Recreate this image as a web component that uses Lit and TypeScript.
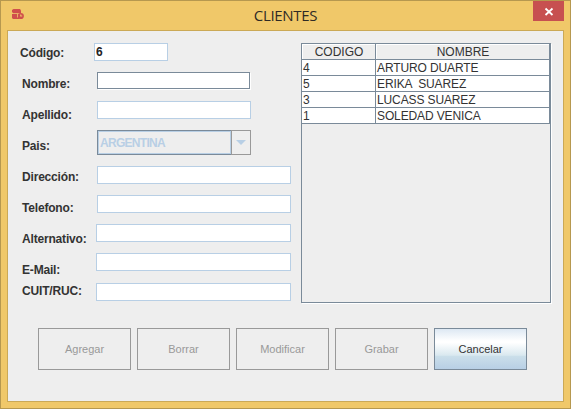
import { LitElement, html, css } from "lit";
import { customElement } from "lit/decorators.js";
import { classMap } from "lit/directives/class-map.js";

interface Field {
  label: string;
  kind: "code" | "focus" | "short" | "combo" | "long" | "wide";
  value?: string;
}

const FIELDS: Field[] = [
  { label: "Código:", kind: "code", value: "6" },
  { label: "Nombre:", kind: "focus" },
  { label: "Apellido:", kind: "short" },
  { label: "Pais:", kind: "combo", value: "ARGENTINA" },
  { label: "Dirección:", kind: "long" },
  { label: "Telefono:", kind: "long" },
  { label: "Alternativo:", kind: "wide" },
  { label: "E-Mail:", kind: "wide" },
  { label: "CUIT/RUC:", kind: "wide" },
];

const ROWS = [
  ["4", "ARTURO DUARTE"],
  ["5", "ERIKA  SUAREZ"],
  ["3", "LUCASS SUAREZ"],
  ["1", "SOLEDAD VENICA"],
];

const ACTIONS = ["Agregar", "Borrar", "Modificar", "Grabar", "Cancelar"];

@customElement("app-root")
export class AppRoot extends LitElement {
  static styles = css`
    * { box-sizing: border-box; }
    :host {
      display: block;
      width: 571px;
      height: 409px;
      font-family: "Liberation Sans", Arial, sans-serif;
      font-size: 12px;
      color: #333;
    }
    .window {
      display: flex;
      flex-direction: column;
      height: 409px;
      padding: 0 6px 6px;
      border: 1px solid #b6984f;
      background: #f0c869;
    }
    .titlebar {
      display: grid;
      grid-template-columns: 36px 1fr 36px;
      flex: none;
      height: 29px;
    }
    .logo { display: block; margin: 8px 0 0 5px; }
    .title {
      font: 15px/28px "Open Sans", "Noto Sans", sans-serif;
      letter-spacing: -0.3px;
      text-align: center;
      color: #2f2a25;
    }
    .close {
      display: block;
      width: 31px;
      height: 20px;
      margin-left: 5px;
      background: #c75050;
    }
    .client {
      flex: 1;
      min-height: 0;
      border: 1px solid #cba956;
      background: #eee;
    }
    .main { display: flex; height: 273px; padding-top: 12px; }
    .labels {
      width: 86px;
      padding: 3px 0 0 14px;
      font-weight: bold;
      line-height: 15px;
      white-space: nowrap;
    }
    .label { margin-bottom: 16px; letter-spacing: -0.18px; }
    .label.code { margin-left: -2px; }
    .label:nth-last-child(2) { margin-bottom: 6px; }
    .fields {
      display: flex;
      flex-direction: column;
      gap: 11px;
      width: 207px;
    }
    .field {
      flex: none;
      display: block;
      width: 154px;
      height: 18px;
      margin: 0 0 0 3px;
      padding: 0 1px;
      border: 1px solid #b8cfe5;
      border-radius: 0;
      outline: none;
      background: #fff;
      color: #222;
      font: bold 12px/16px "Liberation Sans", Arial, sans-serif;
    }
    .field.code { width: 74px; margin-left: 0; }
    .field.long { width: 194px; }
    .field.wide { width: 195px; margin-left: 2px; }
    .field.wide:last-child { margin-top: 1px; }
    .field.focus {
      width: 153px;
      height: 17px;
      margin-bottom: 1px;
      border-color: #7a8a99;
      box-shadow: 1px 1px #fff;
    }
    .combo {
      flex: none;
      display: flex;
      width: 154px;
      height: 25px;
      margin-left: 3px;
    }
    .selected {
      width: 134px;
      border: 1px solid #7a8a99;
      border-right: 0;
      box-shadow: inset 0 0 0 1px #b8cfe5;
      padding-left: 2px;
      color: #b8cfe5;
      font-weight: bold;
      letter-spacing: -0.7px;
      line-height: 24px;
    }
    .arrow {
      display: flex;
      align-items: center;
      justify-content: center;
      width: 20px;
      border: 1px solid #999;
    }
    .scroll {
      width: 250px;
      height: 260px;
      border: 1px solid #7a8a99;
      box-shadow: 1px 1px #fff;
    }
    .row {
      display: grid;
      grid-template-columns: 73px 173px;
      column-gap: 1px;
      width: 248px;
      height: 16px;
      border-bottom: 1px solid #7a8a99;
      border-right: 1px solid #7a8a99;
      background: #7a8a99;
    }
    .cell {
      height: 15px;
      padding-left: 1px;
      background: #fff;
      letter-spacing: -0.12px;
      line-height: 16px;
      white-space: pre;
    }
    .head .cell {
      padding: 0;
      background: #eee;
      border-top: 1px solid #fff;
      border-left: 1px solid #fff;
      letter-spacing: 0;
      text-align: center;
      line-height: 15px;
    }
    .actions { display: flex; gap: 6px; padding: 24px 0 0 30px; }
    .action {
      width: 93px;
      height: 42px;
      padding: 0;
      border: 1px solid #999;
      border-radius: 0;
      background: #eee;
      color: #999;
      font: 11px/40px "Liberation Sans", Arial, sans-serif;
    }
    .action.enabled {
      border-color: #7a8a99;
      background: linear-gradient(#dde8f3 0, #fff 30%, #fff 34%, #d9e8ef 66%, #cbdfea 67%, #b8cfe5 100%);
      color: #333;
    }
  `;

  private renderField(f: Field) {
    if (f.kind === "combo") {
      return html`<div class="combo">
        <div class="selected">${f.value}</div>
        <div class="arrow">
          <svg width="10" height="5" viewBox="0 0 10 5"><path d="M0 0h10L5 5z" fill="#b8cfe5" /></svg>
        </div>
      </div>`;
    }
    return html`<input class=${classMap({ field: true, [f.kind]: true })} .value=${f.value ?? ""} aria-label=${f.label} />`;
  }

  render() {
    return html`
      <div class="window">
        <div class="titlebar">
          <svg class="logo" width="12" height="11" viewBox="0 0 12 11" fill="#d04f4c">
            <path d="M1.5 0H8l1 1.5V4H1L0 3V1z" />
            <path d="M1 4h7v1H1z" fill="#e8b065" />
            <path d="M0 5h7v5H1L0 9z" />
            <circle cx="8.8" cy="7" r="3.1" />
            <path d="M6 5h-.8v3.5H6zM8.2 5.4h1v1.2h1v1h-2z" fill="#f0c869" />
          </svg>
          <div class="title">CLIENTES</div>
          <svg class="close" viewBox="0 0 31 20">
            <path d="M12.5 7.5l7 6.5M19.5 7.5l-7 6.5" stroke="#fff" stroke-width="1.8" />
          </svg>
        </div>
        <div class="client">
          <div class="main">
            <div class="labels">
              ${FIELDS.map((f) => html`<div class=${classMap({ label: true, code: f.kind === "code" })}>${f.label}</div>`)}
            </div>
            <div class="fields">${FIELDS.map((f) => this.renderField(f))}</div>
            <div class="scroll">
              <div class="row head"><div class="cell">CODIGO</div><div class="cell">NOMBRE</div></div>
              ${ROWS.map((r) => html`<div class="row">${r.map((c) => html`<div class="cell">${c}</div>`)}</div>`)}
            </div>
          </div>
          <div class="actions">
            ${ACTIONS.map((a) => {
              const enabled = a === "Cancelar";
              return html`<button class=${classMap({ action: true, enabled })} ?disabled=${!enabled}>${a}</button>`;
            })}
          </div>
        </div>
      </div>
    `;
  }
}
